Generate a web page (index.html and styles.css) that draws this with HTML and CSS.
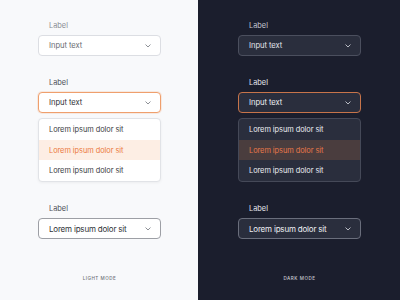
FILE: index.html
```html
<!DOCTYPE html>
<html>
<head>
<meta charset="utf-8">
<link rel="stylesheet" href="styles.css">
</head>
<body>
<div class="page">
  <section class="panel light">
    <div class="group">
      <div class="label">Label</div>
      <div class="box">
        <span class="val muted">Input text</span>
        <svg class="chev" viewBox="0 0 6 4" width="6" height="4"><path d="M0.8 0.8 L3 3 L5.2 0.8" fill="none" stroke="currentColor" stroke-width="0.9" stroke-linecap="round" stroke-linejoin="round"/></svg>
      </div>
    </div>
    <div class="group open">
      <div class="label strong">Label</div>
      <div class="box focus">
        <span class="val">Input text</span>
        <svg class="chev" viewBox="0 0 6 4" width="6" height="4"><path d="M0.8 0.8 L3 3 L5.2 0.8" fill="none" stroke="currentColor" stroke-width="0.9" stroke-linecap="round" stroke-linejoin="round"/></svg>
      </div>
      <div class="menu">
        <div class="opt">Lorem ipsum dolor sit</div>
        <div class="opt active">Lorem ipsum dolor sit</div>
        <div class="opt">Lorem ipsum dolor sit</div>
      </div>
    </div>
    <div class="group">
      <div class="label strong">Label</div>
      <div class="box filled">
        <span class="val big">Lorem ipsum dolor sit</span>
        <svg class="chev" viewBox="0 0 6 4" width="6" height="4"><path d="M0.8 0.8 L3 3 L5.2 0.8" fill="none" stroke="currentColor" stroke-width="0.9" stroke-linecap="round" stroke-linejoin="round"/></svg>
      </div>
    </div>
    <div class="mode">LIGHT MODE</div>
  </section>
  <section class="panel dark">
    <div class="group">
      <div class="label">Label</div>
      <div class="box">
        <span class="val muted">Input text</span>
        <svg class="chev" viewBox="0 0 6 4" width="6" height="4"><path d="M0.8 0.8 L3 3 L5.2 0.8" fill="none" stroke="currentColor" stroke-width="0.9" stroke-linecap="round" stroke-linejoin="round"/></svg>
      </div>
    </div>
    <div class="group open">
      <div class="label strong">Label</div>
      <div class="box focus">
        <span class="val">Input text</span>
        <svg class="chev" viewBox="0 0 6 4" width="6" height="4"><path d="M0.8 0.8 L3 3 L5.2 0.8" fill="none" stroke="currentColor" stroke-width="0.9" stroke-linecap="round" stroke-linejoin="round"/></svg>
      </div>
      <div class="menu">
        <div class="opt">Lorem ipsum dolor sit</div>
        <div class="opt active">Lorem ipsum dolor sit</div>
        <div class="opt">Lorem ipsum dolor sit</div>
      </div>
    </div>
    <div class="group">
      <div class="label strong">Label</div>
      <div class="box filled">
        <span class="val big">Lorem ipsum dolor sit</span>
        <svg class="chev" viewBox="0 0 6 4" width="6" height="4"><path d="M0.8 0.8 L3 3 L5.2 0.8" fill="none" stroke="currentColor" stroke-width="0.9" stroke-linecap="round" stroke-linejoin="round"/></svg>
      </div>
    </div>
    <div class="mode">DARK MODE</div>
  </section>
</div>
</body>
</html>
```

FILE: styles.css
```css
html, body {
  margin: 0;
  padding: 0;
}
body {
  width: 400px;
  height: 300px;
  overflow: hidden;
  font-family: Inter, "Noto Sans", sans-serif;
}
.page {
  display: grid;
  grid-template-columns: 198px 202px;
  height: 300px;
}
.panel {
  display: flex;
  flex-direction: column;
  padding-top: 22px;
  box-sizing: border-box;
}
.light {
  background: #f8f9fb;
  padding-left: 38px;
  padding-right: 37px;
}
.dark {
  background: #1b1e2d;
  padding-left: 40px;
  padding-right: 39px;
}
.group {
  display: flex;
  flex-direction: column;
  margin-bottom: 23px;
}
.group.open {
  margin-bottom: 23px;
}
.label {
  font-size: 7.4px;
  line-height: 8px;
  margin-bottom: 5px;
  margin-left: 11px;
}
.box {
  height: 21px;
  box-sizing: border-box;
  border-radius: 4px;
  border: 1px solid;
  display: flex;
  align-items: center;
  justify-content: space-between;
  padding: 0 9px 0 10px;
}
.val {
  font-size: 7.6px;
  letter-spacing: -0.05px;
}
.val.big {
  font-size: 8px;
  letter-spacing: -0.2px;
}
.chev {
  display: block;
}
.menu {
  margin-top: 5px;
  border-radius: 4px;
  border: 1px solid;
  overflow: hidden;
  display: flex;
  flex-direction: column;
}
.opt {
  height: 20.7px;
  display: flex;
  align-items: center;
  padding-left: 10px;
  font-size: 7.4px;
  letter-spacing: -0.05px;
}
.mode {
  margin-top: 14px;
  text-align: center;
  font-size: 4.6px;
  letter-spacing: 0.5px;
  font-weight: 500;
}

/* light */
.light .label { color: #8a8d94; }
.light .label.strong { color: #4d5057; }
.light .box {
  background: #ffffff;
  border-color: #dcdee3;
  color: #6b6e75;
}
.light .val.muted { color: #6a6d73; }
.light .val { color: #2f3136; }
.light .box.focus {
  border-color: #ef9f6d;
  box-shadow: 0 0 0 1px rgba(239, 159, 109, 0.18);
}
.light .box.filled {
  border-color: #9d9fa5;
}
.light .chev { color: #80838a; }
.light .menu {
  background: #ffffff;
  border-color: #e1e3e7;
  box-shadow: 0 1px 3px rgba(0, 0, 0, 0.05);
}
.light .opt { color: #3b3d42; }
.light .opt.active {
  background: #fdeee4;
  color: #ec7a3e;
}
.light .mode { color: #6e7178; }

/* dark */
.dark .label { color: #c3c6cf; }
.dark .label.strong { color: #e4e6ec; }
.dark .box {
  background: #2a2e3d;
  border-color: #4b4f5e;
}
.dark .val { color: #eef0f4; }
.dark .val.muted { color: #e3e5eb; }
.dark .box.focus {
  border-color: #c7744a;
  background: #2a2e3d;
}
.dark .box.filled {
  border-color: #6a6e7c;
}
.dark .chev { color: #c9ccd4; }
.dark .menu {
  background: #2a2e3d;
  border-color: #454958;
}
.dark .opt { color: #eceef3; }
.dark .opt.active {
  background: #4a3d3e;
  color: #e8784a;
}
.dark .mode { color: #c8cad2; }
```
